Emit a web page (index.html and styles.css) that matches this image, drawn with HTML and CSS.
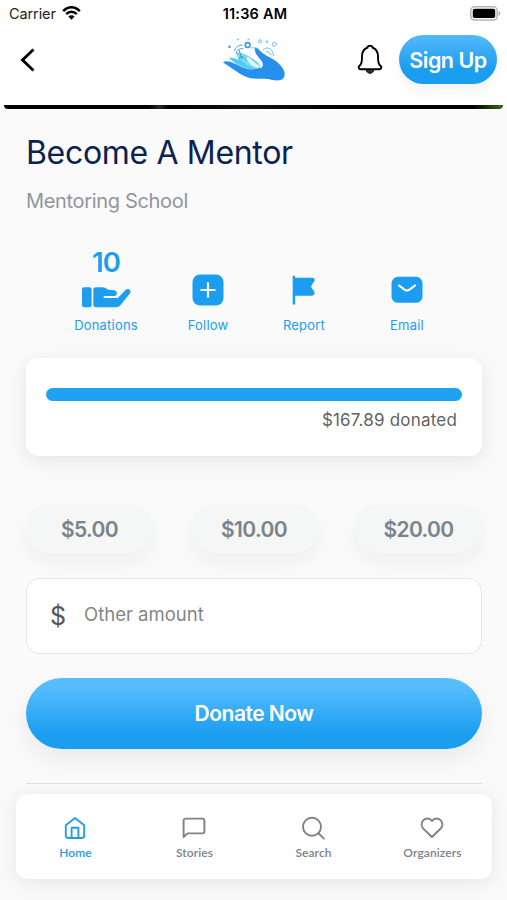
FILE: index.html
```html
<!DOCTYPE html>
<html lang="en">
<head>
<meta charset="utf-8">
<title>Become A Mentor</title>
<link rel="stylesheet" href="styles.css">
</head>
<body>
<div class="screen">
  <header class="top">
    <div class="status">
      <div class="carrier"><span>Carrier</span>
        <svg width="19" height="14" viewBox="0 0 19 14"><g fill="none" stroke="#000" stroke-width="2.5"><path d="M1.2 5.2C6-.1 13-.1 17.8 5.2"/><path d="M4.2 8.2c3.1-3.2 7.5-3.2 10.6 0"/></g><path d="M6.4 10.5c1.8-1.8 4.4-1.8 6.2 0L9.5 13.7z"/></svg>
      </div>
      <span class="clock">11:36 AM</span>
      <svg class="battery" width="31" height="15" viewBox="0 0 31 15"><rect x=".8" y=".8" width="26.4" height="13.2" rx="3.8" fill="#fff" stroke="#b4b4b4" stroke-width="1.5"/><rect x="2.8" y="2.8" width="22.4" height="9.2" rx="1.8"/><path d="M28.6 5v5c2.2-.8 2.2-4.200 0-5z" fill="#aaa"/></svg>
    </div>
    <nav class="navbar">
      <svg width="16" height="24" viewBox="0 0 16 24"><path d="M13.500 1.500 2.500 12l11 10.500" fill="none" stroke="#000" stroke-width="2.900"/></svg>
      <svg class="logo" width="64" height="46" viewBox="0 0 64 46">
        <path d="M7 21c4-1 7 1 10 2l-3-7c6-1 12 3 17 6l8 6-2 5c-12 0-22-4-30-12z" fill="#4fcdf3"/>
        <path d="M15 17c5-1 10 1 15 5l9 7-3 3c-9-1-17-7-21-15z" fill="#7bdcf0"/>
        <path d="M26 20c4 3 6 6 12 9l-2 2c-5-1-9-5-12-9z" fill="#e5f8ff"/>
        <path d="M34 21c4 1 7 4 7 8h-3c-1-3-3-5-4-8z" fill="#fff"/>
        <path d="M1 25.500c2-2 5-1.500 8-.5 7 3 13 7 21 7.500l9-1.500c2.500-1.500 2.500-4 .5-7-3-4-7.500-8-6.700-13.500 3 0 5 3.500 9 6.500 7 4 14 7 18 13 4 5 4 11-1 13-5 1.500-10-1-16-1.300-8 .3-15 .3-21-3C14 35 9 30 1 25.500z" fill="#2691ec"/>
        <g fill="none" stroke="#3c9bdd"><path d="M12.500 14c1-4 4-6 8-6M14.500 16c1-4 4-4.500 7-4.500M17 13l3 9M17 22c3-5 5-1 8 2"/><path d="M28.500 10.500c3 1 6 0 8 1M41 13c4-4 10-2 10.500 6M44 14.500c3 0 5 2 5 4" stroke="#68c6e8"/><circle cx="25.600" cy="8" r="2.400" stroke-width="1.600"/><circle cx="38" cy="4.300" r="1.500" stroke="#68c6e8"/><circle cx="52.300" cy="7.300" r="2" stroke="#68c6e8"/></g>
        <g fill="#4c88cc"><circle cx="7.500" cy="9.800" r="1.200"/><circle cx="16" cy="2.500" r="1" fill="#6bcce8"/><circle cx="26.500" cy="2.500" r="1" fill="#6bcce8"/><circle cx="45" cy="4.800" r="1.200" fill="#6bcce8"/></g>
      </svg>
      <svg class="bell" width="26" height="30" viewBox="0 0 26 30"><path d="M10.500 2.500C10.500.3 15.500.3 15.500 2.500 19.500 4 21 7.500 21 11.500c0 6 .5 7.500 2.700 9.500 1.200 1.200.4 3.200-1.200 3.200h-19c-1.600 0-2.400-2-1.200-3.200C4.500 19 5 17.500 5 11.500 5 7.500 6.500 4 10.500 2.500z" fill="none" stroke="#000" stroke-width="1.900"/><path d="M9.200 24.500h7.600c-.3 5-7.300 5-7.600 0z" fill="#333" stroke="#000"/></svg>
      <button class="signup">Sign Up</button>
    </nav>
  </header>
  <div class="photo"></div>
  <main class="content">
    <h1>Become A Mentor</h1>
    <p class="school">Mentoring School</p>
    <section class="actions">
      <div class="action">
        <b class="count">10</b>
        <svg class="hand" width="50" height="22" viewBox="0 0 50 22"><rect x="1" y="1.300" width="9.600" height="20" rx="2.200"/><path d="M12.300 4c0-1.700 1-2.700 2.700-2.700h6.500c2 0 3 .9 5 2.200l6.300.7c4 .4 4 5.300.7 5.800H23.300c-1 0-1 1.900 0 1.900h13.500L44.500 4c2.500-2.400 6.500.3 4.500 3.200l-9 11.300c-1.300 1.800-2.800 2.700-5 2.700H15c-1.700 0-2.700-.8-2.700-2.600z"/></svg>
        <span class="label">Donations</span>
      </div>
      <div class="action">
        <svg class="icon" width="32" height="32" viewBox="0 0 32 32"><rect x=".5" y=".5" width="31" height="31" rx="7.500"/><path d="M16 9.300v13.400M9.300 16h13.400" stroke="#fff" stroke-width="2.200" stroke-linecap="round"/></svg>
        <span class="label">Follow</span>
      </div>
      <div class="action">
        <svg class="icon" width="32" height="32" viewBox="0 0 32 32"><path d="M4.700 1.800h1.500c.6 0 1 .4 1 1v.9h16.600c2.800 0 3.600 2 2.300 3.900l-2.400 3.700c-.6.9-.6 1.500 0 2.400l2.400 3.800c1.200 2-.1 4.200-2.300 4.200H7.200v8.900H4.700z"/></svg>
        <span class="label">Report</span>
      </div>
      <div class="action">
        <svg class="icon" width="32" height="32" viewBox="0 0 32 32"><rect x=".5" y="2.800" width="31" height="26" rx="6.500"/><path d="M8 11.500l5.500 4.200c1.700 1.200 3.300 1.200 5 0l5.500-4.200" fill="none" stroke="#fff" stroke-width="2.200" stroke-linecap="round"/></svg>
        <span class="label">Email</span>
      </div>
    </section>
    <section class="progress">
      <div class="bar"></div>
      <p class="donated">$167.89 donated</p>
    </section>
    <div class="amounts">
      <button>$5.00</button><button>$10.00</button><button>$20.00</button>
    </div>
    <label class="other"><span class="dollar">$</span><span class="placeholder">Other amount</span></label>
    <button class="donate">Donate Now</button>
    <hr>
  </main>
  <nav class="tabs">
    <a class="tab active"><svg width="24" height="24" viewBox="0 0 24 24"><path d="M2.800 9.300 12 2l9.200 7.300v10.200c0 1.700-.8 2.500-2.500 2.500H5.300c-1.700 0-2.500-.8-2.500-2.500z"/><path d="M8.600 22V11.700h6.800V22"/></svg><span>Home</span></a>
    <a class="tab"><svg width="24" height="24" viewBox="0 0 24 24"><path d="M1.600 21V4.800c0-1.400.8-2.200 2.200-2.200h16.400c1.400 0 2.200.8 2.200 2.200v10.400c0 1.400-.8 2.200-2.200 2.200H5.500z"/></svg><span>Stories</span></a>
    <a class="tab"><svg width="24" height="24" viewBox="0 0 24 24"><circle cx="11" cy="10.700" r="9"/><path d="m17.400 17.200 5.500 5.400"/></svg><span>Search</span></a>
    <a class="tab"><svg width="24" height="24" viewBox="0 0 24 24"><path d="M12 5C9.500 1.500 5.800 2 3.500 4.200 1 6.800 1 10.300 3.500 12.800L12 21l8.500-8.200c2.500-2.500 2.500-6 0-8.600C18.200 2 14.500 1.500 12 5z"/></svg><span>Organizers</span></a>
  </nav>
</div>
</body>
</html>
```

FILE: styles.css
```css
* { box-sizing: border-box; }
body { margin: 0; font-family: Inter, "Liberation Sans", sans-serif; background: #fafafa; }
h1, p { margin: 0; font-weight: 400; }
button { border: 0; padding: 0; font-family: inherit; }
svg { display: block; flex: none; }
.screen { position: relative; width: 507px; height: 900px; overflow: hidden; background: #fafafa; }
.top { height: 105px; background: #fff; }
.status { display: grid; grid-template-columns: 1fr auto 1fr; align-items: center; height: 28px; padding: 0 6px 0 9px; font-size: 14.500px; line-height: 18px; }
.carrier { display: flex; align-items: center; gap: 6px; color: #222; }
.carrier span { letter-spacing: -0.1px; }
.carrier svg { margin-top: -2px; }
.clock { font-weight: 600; letter-spacing: .2px; }
.battery { justify-self: end; margin-top: -2px; }
.navbar { display: flex; align-items: center; height: 64px; padding: 0 10px 0 20px; }
.logo { margin-left: 186px; }
.bell { margin-left: 71px; }
.signup { width: 98px; height: 49px; margin: -1px 0 0 16px; border-radius: 25px; color: #fff; font-size: 21.500px; font-weight: 600; letter-spacing: -0.5px; background: linear-gradient(#55b8fb, #1b9df0 70%); box-shadow: 0 8px 14px rgba(40, 40, 70, .05); }
.photo { width: 499px; height: 4px; margin: 0 4px; border-radius: 0 0 8px 8px; background: linear-gradient(90deg, #000 29%, #262a26 31%, #000 33%, #111 48%, #000 70%, #000 94%, #346b10); }
.content { padding: 26px 25px 0 26px; }
h1 { font-size: 32px; line-height: 36px; letter-spacing: -.33px; color: #0b2150; }
.school { margin-top: 18px; font-size: 20px; line-height: 24px; letter-spacing: -.33px; color: #9195a0; }
.actions { display: grid; grid-template-columns: 98px 106px 86px 120px; margin: 33px 0 0 31px; height: 88px; }
.action { display: flex; flex-direction: column; align-items: center; justify-content: flex-end; color: #1b9df0; }
.action svg { fill: currentColor; }
.count { font-size: 27.500px; line-height: 30px; font-weight: 600; letter-spacing: -1px; margin-bottom: 9px; }
.hand { margin-bottom: 8px; }
.icon { margin-bottom: 10px; }
.label { font-size: 13px; line-height: 18px; letter-spacing: .2px; }
.progress { height: 98px; margin-top: 24px; padding: 30px 20px 0; border-radius: 12px; background: #fff; box-shadow: 0 5px 20px rgba(0, 0, 0, .09); }
.bar { height: 13px; border-radius: 7px; background: #1da1f2; }
.donated { margin: 8px 5px 0 0; text-align: right; font-size: 17px; line-height: 23px; letter-spacing: .2px; color: #626262; }
.amounts { display: flex; justify-content: space-between; margin-top: 48px; }
.amounts button { width: 127px; height: 49px; padding-top: 2px; border-radius: 25px; color: #7b838b; font-size: 21px; font-weight: 600; letter-spacing: -.6px; background: #f5f6f6; box-shadow: 0 9px 18px rgba(40, 40, 70, .05); }
.other { display: flex; align-items: center; height: 76px; margin-top: 25px; padding-left: 23px; border: 1px solid #e6e6e6; border-radius: 13px; background: #fff; }
.dollar { width: 34px; color: #555; font-size: 25px; }
.placeholder { color: #858585; font-size: 18.500px; margin-top: -4px; }
.donate { display: block; width: 100%; height: 71px; margin-top: 24px; border-radius: 36px; color: #fff; font-size: 21px; font-weight: 600; letter-spacing: -.5px; background: linear-gradient(#58bdff 10%, #1b9df0 80%); box-shadow: 0 10px 22px rgba(40, 40, 70, .08); }
hr { height: 1px; margin: 34px 0 0; border: 0; background: #dfe0e1; }
.tabs { position: absolute; left: 16px; right: 15px; top: 794px; height: 85px; display: grid; grid-template-columns: repeat(4, 1fr); border-radius: 12px; background: #fff; box-shadow: 0 3px 20px rgba(0, 0, 0, .09); }
.tab { display: flex; flex-direction: column; align-items: center; padding-top: 22px; color: #7b828c; font: 600 12px/18px Lato, sans-serif; letter-spacing: .1px; }
.tab svg { fill: none; stroke: currentColor; stroke-width: 1.900; stroke-linejoin: round; stroke-linecap: round; margin: 0 0 4px -1px; }
.active { color: #279bea; }
```
